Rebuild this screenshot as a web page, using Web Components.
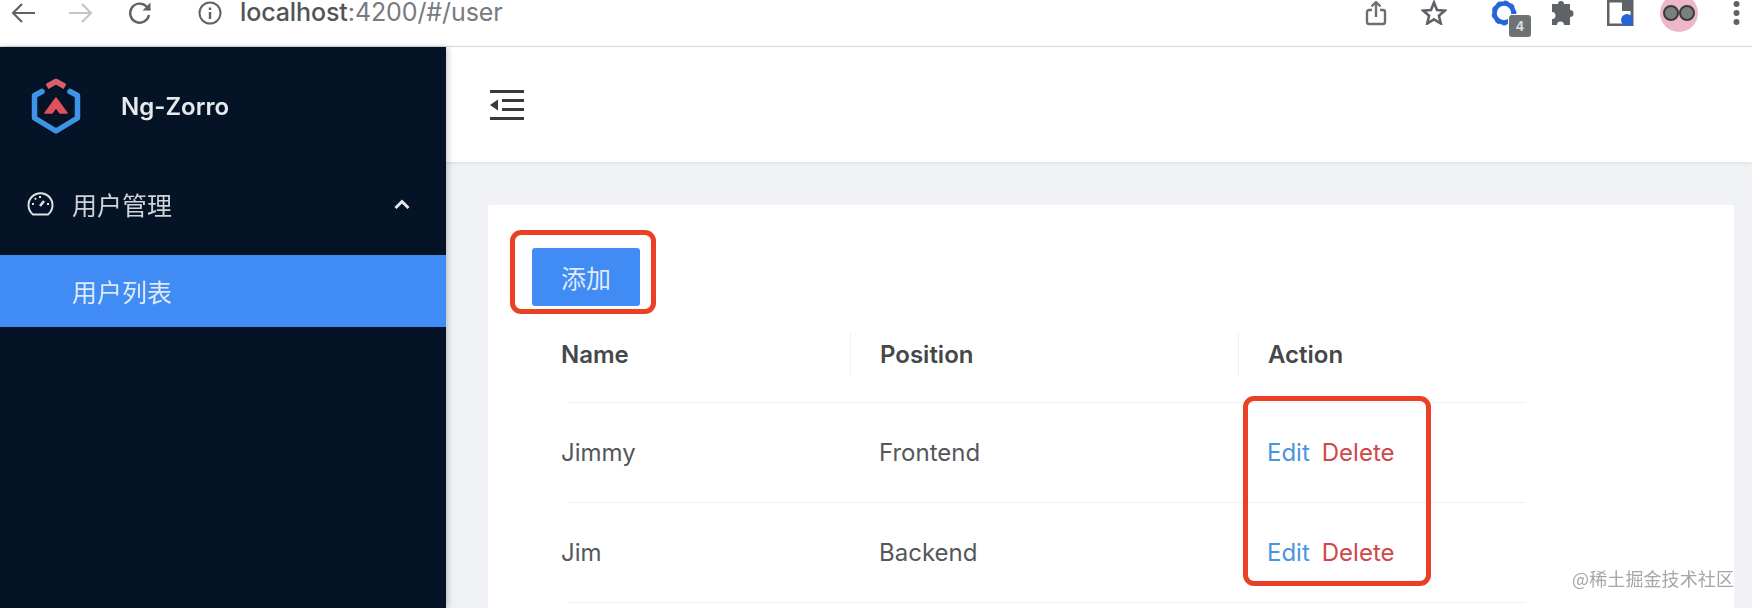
<!DOCTYPE html>
<html lang="zh">
<head>
<meta charset="utf-8">
<title>Ng-Zorro</title>
<style>
html, body { margin: 0; height: 100%; overflow: hidden; background: #f0f2f5; }
body { font-family: Inter, "Noto Sans CJK SC", sans-serif; }
</style>
</head>
<body>
<app-shell>
  <browser-bar slot="top" url="localhost" rest=":4200/#/user"></browser-bar>
  <side-nav slot="side"></side-nav>
  <top-header slot="header"></top-header>
  <user-card slot="content">
    <user-row slot="rows" name="Jimmy" position="Frontend"></user-row>
    <user-row slot="rows" name="Jim" position="Backend"></user-row>
  </user-card>
</app-shell>

<script>
const shellTpl = document.createElement("template")
shellTpl.innerHTML = `
<style>
:host { display: flex; flex-direction: column; height: 608px; width: 1752px; position: relative; overflow: hidden; filter: blur(.45px); }
.body { flex: 1; display: flex; min-height: 0; }
.main { flex: 1; display: flex; flex-direction: column; min-width: 0; }
.content { flex: 1; padding: 43px 18px 0 42px; min-height: 0; display: flex; }
.mark { position: absolute; right: 18px; bottom: 17px; font: 18px "Noto Sans CJK SC", sans-serif; color: #a3a6aa; letter-spacing: .1px; }
</style>
<slot name="top"></slot>
<div class="body">
  <slot name="side"></slot>
  <div class="main">
    <slot name="header"></slot>
    <div class="content"><slot name="content"></slot></div>
  </div>
</div>
<div class="mark">@稀土掘金技术社区</div>
`
class AppShell extends HTMLElement {
  constructor() {
    super()
    this.attachShadow({mode: "open"})
    this.shadowRoot.appendChild(shellTpl.content.cloneNode(true))
  }
}
customElements.define("app-shell", AppShell)

const barTpl = document.createElement("template")
barTpl.innerHTML = `
<style>
:host { display: flex; align-items: center; flex: none; background: #fff; border-bottom: 1px solid #dcdee0; color: #5f6368; overflow: hidden; box-sizing: border-box; height: 47px; padding: 0 0 21px 0; }
svg { display: block; flex: none; }
.nav { display: flex; align-items: center; margin-left: 10px; }
.url { margin-left: 18px; font: 25px/1 Inter, "Liberation Sans", sans-serif; letter-spacing: -.1px; color: #777a7e; white-space: nowrap; }
.url b { font-weight: 500; color: #505357; }
.info { margin-left: 45px; }
.right { margin-left: auto; display: flex; align-items: center; }
.ext { position: relative; margin-left: 44px; width: 26px; height: 26px; }
.ext span { position: absolute; left: 18px; top: 15px; width: 22px; height: 22px; border-radius: 3px; background: #6f7275; color: #dfe0e1; font: 600 14px/22px "Liberation Sans", sans-serif; text-align: center; box-shadow: 0 0 0 1px #fff; }
.avatar { width: 38px; height: 38px; border-radius: 50%; background: #ecb8c8; margin-left: 26px; display: flex; align-items: center; justify-content: center; }
</style>
<div class="nav">
  <svg width="26" height="24" viewBox="0 0 26 24" fill="none" stroke="#5f6368" stroke-width="2.2"><path d="M25 12H3M12 3l-9 9 9 9"/></svg>
  <svg style="margin-left:32px" width="26" height="24" viewBox="0 0 26 24" fill="none" stroke="#c3c5c8" stroke-width="2.2"><path d="M1 12h22M14 3l9 9-9 9"/></svg>
  <svg style="margin-left:33px" width="26" height="26" viewBox="0 0 26 26" fill="none" stroke="#5f6368" stroke-width="2.4"><path d="M22 15a9.500 9.500 0 1 1-2.500-8.500L23 10"/><path d="M23.500 2.500V10.500H15.500" stroke-width="0" fill="#5f6368"/></svg>
</div>
<svg class="info" width="24" height="24" viewBox="0 0 24 24" fill="none" stroke="#5f6368" stroke-width="2"><circle cx="12" cy="12" r="10.500"/><path d="M12 11v7M12 6.500v2.500" stroke-width="2.400"/></svg>
<div class="url"><b></b><span></span></div>
<div class="right">
  <svg width="22" height="26" viewBox="0 0 22 26" fill="none" stroke="#6b6e72" stroke-width="2.400" stroke-linejoin="round"><path d="M7 10H4a2 2 0 0 0-2 2v10a2 2 0 0 0 2 2h14a2 2 0 0 0 2-2V12a2 2 0 0 0-2-2h-3M11 17V2M6.500 6.500L11 2l4.500 4.500"/></svg>
  <svg style="margin-left:34px" width="26" height="25" viewBox="0 0 26 25" fill="none" stroke="#5f6368" stroke-width="2.600"><path d="M13 2.500l3 7.500 8 .6-6.100 5.200 1.900 7.700-6.800-4.200-6.800 4.200 1.900-7.700L2 10.600l8-.6z"/></svg>
  <div class="ext">
    <svg width="26" height="26" viewBox="0 0 26 26" fill="none" stroke="#2565d8" stroke-width="4.600"><circle cx="13" cy="13" r="9.500"/><circle cx="13" cy="13" r="11.200" stroke-width="2.400" stroke-dasharray="4 3.500"/></svg>
    <span>4</span>
  </div>
  <svg style="margin-left:34px" width="26" height="24" viewBox="0 0 26 24" fill="#5f6368"><path d="M10 0a3 3 0 0 1 3 3h6v6a3.500 3.500 0 0 1 0 7v8h-6a3.500 3.500 0 0 0-7 0H1v-6a3.500 3.500 0 0 0 0-7V3h6a3 3 0 0 1 3-3z"/></svg>
  <svg style="margin-left:30px" width="27" height="26" viewBox="0 0 27 26"><path d="M1 1h24v24H1z" fill="none" stroke="#5f6368" stroke-width="3"/><path d="M15 1h10v10H15z" fill="#5f6368"/><circle cx="20" cy="20" r="6" fill="#2565d8"/></svg>
  <div class="avatar">
    <svg width="34" height="18" viewBox="0 0 34 18"><circle cx="9" cy="9" r="7" fill="#7c7f80" stroke="#3b3b3c" stroke-width="2"/><circle cx="25" cy="9" r="7" fill="#7c7f80" stroke="#3b3b3c" stroke-width="2"/></svg>
  </div>
  <svg style="margin:0 12px 0 35px" width="7" height="26" viewBox="0 0 7 26" fill="#5f6368"><circle cx="3.500" cy="4" r="3"/><circle cx="3.500" cy="13" r="3"/><circle cx="3.500" cy="22" r="3"/></svg>
</div>
`
class BrowserBar extends HTMLElement {
  constructor() {
    super()
    this.attachShadow({mode: "open"})
    this.shadowRoot.appendChild(barTpl.content.cloneNode(true))
    this.shadowRoot.querySelector(".url b").innerText = this.getAttribute("url")
    this.shadowRoot.querySelector(".url span").innerText = this.getAttribute("rest")
  }
}
customElements.define("browser-bar", BrowserBar)

const navTpl = document.createElement("template")
navTpl.innerHTML = `
<style>
:host { display: block; width: 446px; flex: none; background: #041325; color: #fff; box-shadow: 2px 0 6px rgba(0,21,41,.22); position: relative; }
.logo { display: flex; align-items: center; height: 119px; padding-left: 30px; }
.logo b { margin-left: 39px; font: 600 24px/1 Inter, sans-serif; letter-spacing: 0; color: #e6eaee; }
.item { display: flex; align-items: center; height: 72px; margin-top: 2px; padding-left: 27px; font: 25px/1 "Noto Sans CJK SC", sans-serif; color: #cfd3d8; }
.item svg.gauge { margin-right: 18px; }
.item svg.up { margin-left: auto; margin-right: 36px; }
.sub { padding-left: 72px; height: 72px; margin-top: 15px; display: flex; align-items: center; background: #418cf4; font: 25px/1 "Noto Sans CJK SC", sans-serif; color: #dfeafb; }
</style>
<div class="logo">
  <svg width="52" height="60" viewBox="0 0 52 60" fill="none">
    <path d="M12 14.500L4.500 18.500V41L26 54l21.500-13V18.500L40 14.500" stroke="#3f94e8" stroke-width="5.500" stroke-linecap="round" stroke-linejoin="round"/>
    <path d="M17 9.500L26 4.500l9 5" stroke="#d9606a" stroke-width="5.500" stroke-linejoin="round"/>
    <path d="M26 21l11 15h-7l-4-5.500-4 5.500h-7z" fill="#e0505a" stroke="#e0505a" stroke-width="1.500" stroke-linejoin="round"/>
  </svg>
  <b>Ng-Zorro</b>
</div>
<div class="item">
  <svg class="gauge" width="27" height="24" viewBox="0 0 27 24" fill="none" stroke="#dfe2e6" stroke-width="2"><path d="M6 22.500A12 12 0 1 1 21 22.500z" stroke-linejoin="round"/><path d="M13 14l4-5" stroke-width="2.500"/><path d="M5 12h2M20 12h2M13 4v2M8 6l1 1.500"/></svg>
  用户管理
  <svg class="up" width="16" height="10" viewBox="0 0 16 10" fill="none" stroke="#e6e8eb" stroke-width="3"><path d="M1.500 9L8 2.500 14.500 9"/></svg>
</div>
<div class="sub">用户列表</div>
`
class SideNav extends HTMLElement {
  constructor() {
    super()
    this.attachShadow({mode: "open"})
    this.shadowRoot.appendChild(navTpl.content.cloneNode(true))
  }
}
customElements.define("side-nav", SideNav)

const headerTpl = document.createElement("template")
headerTpl.innerHTML = `
<style>
:host { display: flex; align-items: center; height: 115px; flex: none; background: #fff; box-shadow: 0 1px 4px rgba(0,21,41,.10); padding-left: 44px; }
svg { display: block; }
</style>
<svg width="34" height="30" viewBox="0 0 34 30" fill="#3a3a3c"><path d="M0 0h34v3H0zM12 9h22v3H12zM12 18h22v3H12zM0 27h34v3H0zM0 15l8-5.500v11z"/></svg>
`
class TopHeader extends HTMLElement {
  constructor() {
    super()
    this.attachShadow({mode: "open"})
    this.shadowRoot.appendChild(headerTpl.content.cloneNode(true))
  }
}
customElements.define("top-header", TopHeader)

const cardTpl = document.createElement("template")
cardTpl.innerHTML = `
<style>
:host { display: block; flex: 1; background: #fff; border-radius: 2px; padding: 43px 0 0 44px; height: 500px; box-sizing: border-box; position: relative; font: 25px/1 Inter, sans-serif; }
button { display: block; width: 108px; height: 58px; border: 0; border-radius: 3px; background: #418cf4; color: #dfeafb; font: 25px/1 "Noto Sans CJK SC", sans-serif; padding: 0; }
.table { width: 994px; margin-top: 8px; }
.head { display: grid; grid-template-columns: 318px 388px 1fr; height: 82px; padding-bottom: 7px; align-items: center; background: linear-gradient(#f0f0f0, #f0f0f0) 36px 100% / calc(100% - 36px) 1px no-repeat; font-weight: 600; font-size: 24px; color: #45474a; }
.head span { padding-left: 29px; height: 44px; line-height: 44px; border-left: 1px solid #f0f0f0; }
.head span:first-child { border-left: 0; }
.note { position: absolute; border: 5px solid #ea4025; border-radius: 11px; box-sizing: border-box; }
.note.a { left: 22px; top: 25px; width: 146px; height: 84px; }
.note.b { left: 755px; top: 191px; width: 188px; height: 190px; }
</style>
<button>添加</button>
<div class="table">
  <div class="head"><span>Name</span><span>Position</span><span>Action</span></div>
  <slot name="rows"></slot>
</div>
<div class="note a"></div>
<div class="note b"></div>
`
class UserCard extends HTMLElement {
  constructor() {
    super()
    this.attachShadow({mode: "open"})
    this.shadowRoot.appendChild(cardTpl.content.cloneNode(true))
  }
}
customElements.define("user-card", UserCard)

const rowTpl = document.createElement("template")
rowTpl.innerHTML = `
<style>
:host { display: grid; grid-template-columns: 318px 388px 1fr; height: 100px; align-items: center; background: linear-gradient(#f0f0f0, #f0f0f0) 36px 100% / calc(100% - 36px) 1px no-repeat; font: 24px/1 Inter, sans-serif; color: #55575a; }
div { padding-left: 29px; }
.edit { color: #4b94de; }
.del { color: #d0474c; margin-left: 12px; }
</style>
<div class="name"></div>
<div class="pos"></div>
<div><span class="edit">Edit</span><span class="del">Delete</span></div>
`
class UserRow extends HTMLElement {
  constructor() {
    super()
    this.attachShadow({mode: "open"})
    this.shadowRoot.appendChild(rowTpl.content.cloneNode(true))
    this.shadowRoot.querySelector(".name").innerText = this.getAttribute("name")
    this.shadowRoot.querySelector(".pos").innerText = this.getAttribute("position")
  }
}
customElements.define("user-row", UserRow)
</script>
</body>
</html>
